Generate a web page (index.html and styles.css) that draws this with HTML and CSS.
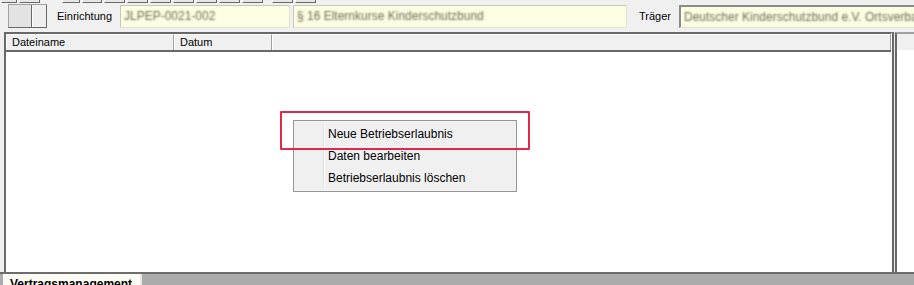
FILE: index.html
```html
<!DOCTYPE html>
<html lang="de">
<head>
    <meta charset="UTF-8">
    <title>Betriebserlaubnis</title>
    <link rel="stylesheet" href="styles.css">
</head>
<body>
    <!-- Werkzeugleiste (nur unterer Rand sichtbar) -->
    <div class="toolstrip">
        <span class="tool w16"></span>
        <span class="tool w21"></span>
        <span class="tool w18 gap"></span>
        <span class="tool w20"></span>
        <span class="tool w21"></span>
        <span class="tool w21"></span>
        <span class="tool w21"></span>
        <span class="tool w21"></span>
        <span class="tool w21"></span>
        <span class="tool w21"></span>
        <span class="tool w21"></span>
        <span class="tool w21 gap2"></span>
        <span class="tool w21"></span>
    </div>

    <!-- Filterzeile -->
    <div class="filterbar">
        <div class="toggle"><span class="toggle-left"></span><span class="toggle-right"></span></div>
        <label class="label">Einrichtung</label>
        <div class="field field-nr"><span class="blurred">JLPEP-0021-002</span></div>
        <div class="field field-name"><span class="blurred">§ 16 Elternkurse Kinderschutzbund</span></div>
        <label class="label label-traeger">Träger</label>
        <div class="field field-traeger"><span class="blurred">Deutscher Kinderschutzbund e.V. Ortsverband</span></div>
    </div>

    <!-- Dateiliste -->
    <div class="workspace">
        <div class="filelist">
            <div class="list-header">
                <div class="col col-name">Dateiname</div>
                <div class="col col-date">Datum</div>
                <div class="col col-rest"></div>
            </div>
            <div class="list-body"></div>
        </div>
        <div class="splitter"></div>
        <div class="sidepanel">
            <div class="side-header"></div>
        </div>
    </div>

    <!-- Reiter unten -->
    <div class="tabbar">
        <div class="tab">Vertragsmanagement</div>
    </div>

    <!-- Kontextmenü -->
    <div class="context-menu">
        <div class="menu-item">Neue Betriebserlaubnis</div>
        <div class="menu-item">Daten bearbeiten</div>
        <div class="menu-item">Betriebserlaubnis löschen</div>
    </div>
    <!-- rote Markierung -->
    <div class="marker"></div>
</body>
</html>
```

FILE: styles.css
```css
html, body {
    margin: 0;
    padding: 0;
}

body {
    width: 914px;
    height: 285px;
    overflow: hidden;
    position: relative;
    background-color: #f0f0f0;
    font-family: "Liberation Sans", Arial, sans-serif;
    font-size: 11px;
    color: #000;
}

/* Werkzeugleiste */
.toolstrip {
    display: flex;
    height: 4px;
    padding-left: 1px;
    gap: 2px;
}
.tool {
    display: block;
    height: 2px;
    background-color: #e6e6e6;
    border-left: 1px solid #fff;
    border-right: 1px solid #696969;
    border-bottom: 1px solid #696969;
}
.w16 { width: 14px; }
.w18 { width: 16px; }
.w20 { width: 18px; }
.w21 { width: 19px; }
.gap { margin-left: 20px; }
.gap2 { margin-left: 7px; }

/* Filterzeile */
.filterbar {
    display: flex;
    align-items: center;
    height: 24px;
    padding-left: 8px;
    margin-bottom: 4px;
}
.toggle {
    display: flex;
    width: 39px;
    height: 24px;
    box-sizing: border-box;
    border: 1px solid #a0a0a0;
    border-right-color: #696969;
    border-bottom-color: #696969;
}
.toggle-left {
    width: 22px;
    background-color: #e3e3e3;
    border-right: 1px solid #696969;
}
.toggle-right {
    flex: 1;
    background-color: #efefef;
    border-left: 1px solid #fff;
}
.label {
    margin-left: 10px;
    width: 53px;
}
.label-traeger {
    margin-left: 12px;
    width: 28px;
}
.field {
    height: 23px;
    box-sizing: border-box;
    background-color: #fdfde3;
    border: 1px solid #e4e4d4;
    border-top-color: #c8c8b8;
    border-left-color: #c8c8b8;
    display: flex;
    align-items: center;
    padding-left: 3px;
    overflow: hidden;
    white-space: nowrap;
    font-size: 12px;
}
.field-nr {
    width: 170px;
    margin-left: 10px;
}
.field-name {
    width: 334px;
    margin-left: 3px;
}
.field-traeger {
    flex: 1;
    margin-left: 12px;
    border-top: 2px solid #8a8a8a;
    border-left: 2px solid #8a8a8a;
    border-right: none;
}
/* unscharf gemachte Daten */
.blurred {
    color: transparent;
    text-shadow: 0 0 2px #6e6e58;
}

/* Arbeitsbereich */
.workspace {
    display: flex;
    height: 240px;
    padding-left: 4px;
}
.filelist {
    width: 885px;
    display: flex;
    flex-direction: column;
    border-top: 2px solid #696969;
    border-left: 2px solid #696969;
    border-right: 1px solid #f8f8f8;
    background-color: #fff;
}
.list-header {
    display: flex;
    height: 16px;
    background-color: #f0f0f0;
    border-bottom: 2px solid #696969;
}
.col {
    box-sizing: border-box;
    height: 16px;
    line-height: 15px;
    padding-left: 5px;
    border-top: 1px solid #fff;
    border-left: 1px solid #fff;
    border-right: 1px solid #a0a0a0;
}
.col-name { width: 168px; }
.col-date { width: 98px; }
.col-rest { flex: 1; }
.list-body {
    flex: 1;
    background-color: #fff;
}
.splitter {
    width: 1px;
    border-left: 2px solid #696969;
    background-color: #e8e8e8;
}
.sidepanel {
    flex: 1;
    border-top: 2px solid #a0a0a0;
    border-left: 2px solid #696969;
    background-color: #fff;
}
.side-header {
    height: 16px;
    background-color: #f0f0f0;
}

/* Reiter */
.tabbar {
    height: 13px;
    background-color: #ababab;
    border-top: 2px solid #6d6d6d;
    display: flex;
}
.tab {
    width: 130px;
    margin-left: 3px;
    padding: 3px 0 0 7px;
    background-color: #fcfcf4;
    border-right: 2px solid #e8e8e8;
    font-size: 12px;
    font-weight: bold;
    white-space: nowrap;
    overflow: hidden;
}

/* Kontextmenü */
.context-menu {
    position: absolute;
    left: 293px;
    top: 120px;
    width: 222px;
    padding: 2px 0;
    background-color: #f0f0f0;
    border: 1px solid #979797;
    font-size: 12px;
}
.context-menu::before {
    content: "";
    position: absolute;
    left: 29px;
    top: 2px;
    bottom: 2px;
    width: 1px;
    background-color: #e2e2e2;
    border-right: 1px solid #fff;
}
.menu-item {
    height: 22px;
    line-height: 22px;
    padding-left: 34px;
}

.marker {
    position: absolute;
    left: 280px;
    top: 111px;
    width: 246px;
    height: 35px;
    border: 2px solid #e0284a;
    border-radius: 1px;
}
```
